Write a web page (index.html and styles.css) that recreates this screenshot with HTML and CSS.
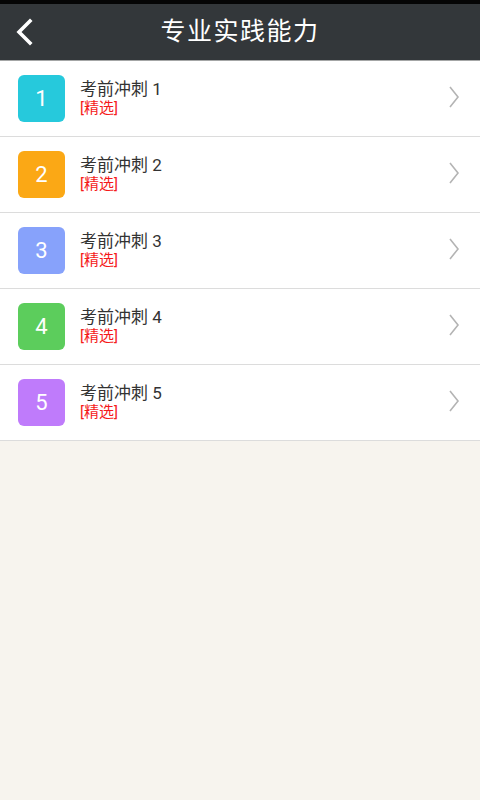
FILE: index.html
```html
<!DOCTYPE html>
<html lang="zh-CN">
	<head>
		<meta charset="UTF-8" />
		<meta name="viewport" content="width=device-width, initial-scale=1.0" />
		<title>专业实践能力</title>
		<link rel="stylesheet" href="styles.css">
	</head>
	<body>
		<header class="topbar">
			<span class="back">
				<svg width="22" height="28" viewBox="0 0 22 28"><path d="M16 3 L5 14 L16 25" fill="none" stroke="#fff" stroke-width="3.6" stroke-linecap="square"/></svg>
			</span>
			<h1>专业实践能力</h1>
		</header>
		<ul class="list">
			<li class="item">
				<span class="badge c1">1</span>
				<span class="text"><span class="title">考前冲刺 1</span><span class="tag">[精选]</span></span>
				<svg class="chev" width="14" height="24" viewBox="0 0 14 24"><path d="M3 2 L11 12 L3 22" fill="none" stroke="#b4b4b4" stroke-width="1.6"/></svg>
			</li>
			<li class="item">
				<span class="badge c2">2</span>
				<span class="text"><span class="title">考前冲刺 2</span><span class="tag">[精选]</span></span>
				<svg class="chev" width="14" height="24" viewBox="0 0 14 24"><path d="M3 2 L11 12 L3 22" fill="none" stroke="#b4b4b4" stroke-width="1.6"/></svg>
			</li>
			<li class="item">
				<span class="badge c3">3</span>
				<span class="text"><span class="title">考前冲刺 3</span><span class="tag">[精选]</span></span>
				<svg class="chev" width="14" height="24" viewBox="0 0 14 24"><path d="M3 2 L11 12 L3 22" fill="none" stroke="#b4b4b4" stroke-width="1.6"/></svg>
			</li>
			<li class="item">
				<span class="badge c4">4</span>
				<span class="text"><span class="title">考前冲刺 4</span><span class="tag">[精选]</span></span>
				<svg class="chev" width="14" height="24" viewBox="0 0 14 24"><path d="M3 2 L11 12 L3 22" fill="none" stroke="#b4b4b4" stroke-width="1.6"/></svg>
			</li>
			<li class="item">
				<span class="badge c5">5</span>
				<span class="text"><span class="title">考前冲刺 5</span><span class="tag">[精选]</span></span>
				<svg class="chev" width="14" height="24" viewBox="0 0 14 24"><path d="M3 2 L11 12 L3 22" fill="none" stroke="#b4b4b4" stroke-width="1.6"/></svg>
			</li>
		</ul>
	</body>
</html>
```

FILE: styles.css
```css
html, body {
	margin: 0;
	height: 100%;
	background: #f7f4ee;
	font-family: Roboto, 'Noto Sans CJK SC', sans-serif;
}
.topbar {
	position: relative;
	display: flex;
	align-items: center;
	justify-content: center;
	height: 56px;
	border-top: 4px solid #050505;
	border-bottom: 1px solid #a4a6a6;
	background: #33373a;
}
.topbar h1 {
	margin: 0 0 1px;
	color: #fff;
	font-size: 25px;
	line-height: 30px;
	font-weight: normal;
	letter-spacing: 1.5px;
}
.back {
	position: absolute;
	left: 14px;
	top: 14px;
	display: flex;
}
.list {
	margin: 0;
	padding: 0;
	list-style: none;
	background: #fff;
}
.item {
	display: flex;
	align-items: center;
	height: 75px;
	padding: 0 18px;
	border-bottom: 1px solid #dcdcdc;
}
.badge {
	display: flex;
	align-items: center;
	justify-content: center;
	width: 47px;
	height: 47px;
	border-radius: 6px;
	color: #fff;
	font-size: 22px;
}
.c1 { background: #26c9dc; }
.c2 { background: #fba815; }
.c3 { background: #87a2fb; }
.c4 { background: #5ccd5c; }
.c5 { background: #bf7bfb; }
.text {
	display: flex;
	flex-direction: column;
	flex: 1;
	margin-left: 15px;
	margin-bottom: 2px;
}
.title {
	color: #333;
	font-size: 17px;
	line-height: 20px;
}
.tag {
	color: #f51a1a;
	font-size: 15px;
	line-height: 18px;
}
.chev {
	margin-right: 1px;
	margin-bottom: 3px;
}
```
